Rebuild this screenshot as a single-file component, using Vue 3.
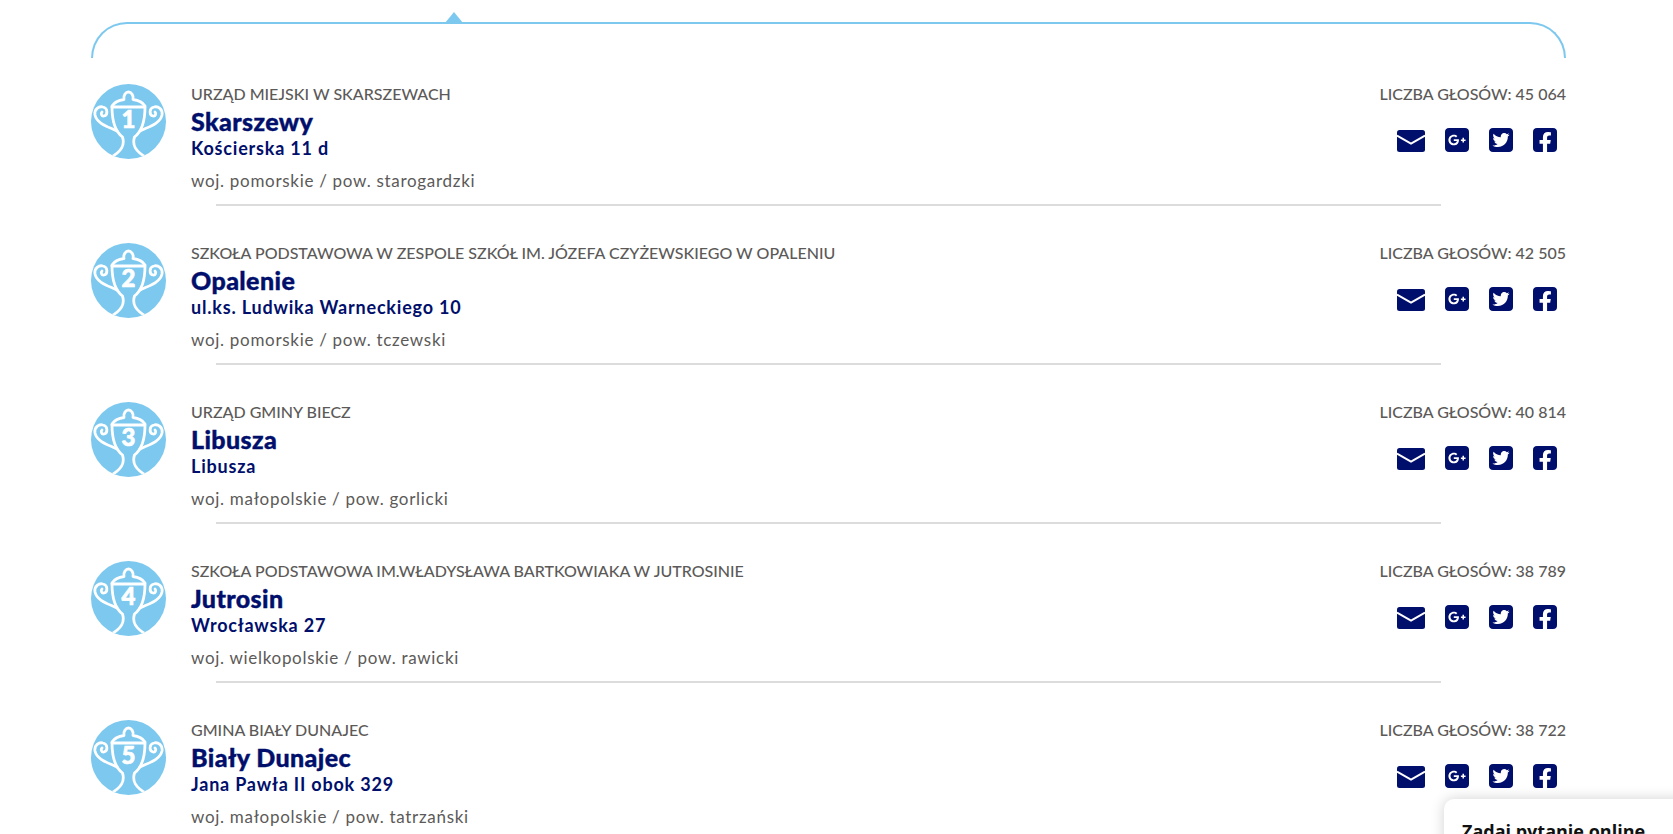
<script setup>
const rows = [
  { n: 1, org: 'URZĄD MIEJSKI W SKARSZEWACH', name: 'Skarszewy', addr: 'Kościerska 11 d', region: 'woj. pomorskie / pow. starogardzki', votes: '45 064' },
  { n: 2, org: 'SZKOŁA PODSTAWOWA W ZESPOLE SZKÓŁ IM. JÓZEFA CZYŻEWSKIEGO W OPALENIU', name: 'Opalenie', addr: 'ul.ks. Ludwika Warneckiego 10', region: 'woj. pomorskie / pow. tczewski', votes: '42 505' },
  { n: 3, org: 'URZĄD GMINY BIECZ', name: 'Libusza', addr: 'Libusza', region: 'woj. małopolskie / pow. gorlicki', votes: '40 814' },
  { n: 4, org: 'SZKOŁA PODSTAWOWA IM.WŁADYSŁAWA BARTKOWIAKA W JUTROSINIE', name: 'Jutrosin', addr: 'Wrocławska 27', region: 'woj. wielkopolskie / pow. rawicki', votes: '38 789' },
  { n: 5, org: 'GMINA BIAŁY DUNAJEC', name: 'Biały Dunajec', addr: 'Jana Pawła II obok 329', region: 'woj. małopolskie / pow. tatrzański', votes: '38 722' },
]
</script>

<template>
  <div class="page">
    <div class="frame"><span class="tip"></span></div>
    <section v-for="r in rows" :key="r.n" class="row">
      <div class="main">
        <svg class="badge" viewBox="0 0 75 75">
          <defs><clipPath id="disc"><circle cx="37.5" cy="37.5" r="37.5" /></clipPath></defs>
          <circle cx="37.5" cy="37.5" r="37.5" fill="#7dc8ee" />
          <g fill="none" stroke="#fff" stroke-width="2.8" stroke-linecap="round" stroke-linejoin="round" clip-path="url(#disc)">
            <path d="M21 23H54C54 40 50 48 43.5 53C41 61 44 67 56 74" />
            <path d="M21 23C21 40 25 48 31.5 53C34 61 31 67 19 74" />
            <path d="M21 22C24 17 29 16 33 15.5C32 11 35 8 37.5 8C40 8 43 11 42 15.5C46 16 51 17 54 22" />
            <path d="M26 47C18 43 6 40 4 31C3 25 8 22 12 23C17 24 17 31 13 32C10.500 32.500 9.500 29.500 11 28" />
            <path d="M49 47C57 43 69 40 71 31C72 25 67 22 63 23C58 24 58 31 62 32C64.500 32.500 65.500 29.500 64 28" />
          </g>
          <text x="37.500" y="44" text-anchor="middle" class="badge-num">{{ r.n }}</text>
        </svg>
        <div class="info">
          <div class="org">{{ r.org }}</div>
          <h3 class="name">{{ r.name }}</h3>
          <div class="addr">{{ r.addr }}</div>
          <div class="region">{{ r.region }}</div>
        </div>
        <div class="side">
          <div class="votes">LICZBA GŁOSÓW: {{ r.votes }}</div>
          <div class="icons">
            <svg class="mail" viewBox="0 0 28 22">
              <rect width="28" height="22" rx="2.500" fill="#000f6b" />
              <path d="M0 5.500L14 13.500L28 5.500" fill="none" stroke="#fff" stroke-width="2" />
            </svg>
            <svg class="soc" viewBox="0 32 448 448"><path fill="#000f6b" d="M400 32H48C21.500 32 0 53.500 0 80v352c0 26.500 21.500 48 48 48h352c26.500 0 48-21.500 48-48V80c0-26.500-21.500-48-48-48zM164 356c-55.300 0-100-44.700-100-100s44.700-100 100-100c27 0 49.500 9.800 67 26.200l-27.100 26.100c-7.400-7.100-20.300-15.400-39.800-15.400-34.100 0-61.900 28.200-61.900 63.200 0 34.900 27.800 63.200 61.900 63.200 39.600 0 54.400-28.500 56.800-43.100H164v-34.400h94.400c1 5 1.600 10.100 1.600 16.600 0 57.100-38.300 97.600-96 97.600zm220-81.800h-29v29h-29.200v-29h-29V245h29v-29H355v29h29v29.200z"/></svg>
            <svg class="soc" viewBox="0 32 448 448"><path fill="#000f6b" d="M400 32H48C21.500 32 0 53.500 0 80v352c0 26.500 21.500 48 48 48h352c26.500 0 48-21.500 48-48V80c0-26.500-21.500-48-48-48zm-48.900 158.800c.2 2.800.2 5.700.2 8.500 0 86.700-66 186.600-186.600 186.600-37.200 0-71.700-10.800-100.700-29.400 5.300.6 10.400.8 15.800.8 30.700 0 58.900-10.400 81.400-28-28.800-.6-53-19.500-61.300-45.500 10.100 1.500 19.200 1.500 29.600-1.200-30-6.100-52.500-32.500-52.500-64.400v-.8c8.700 4.900 18.900 7.900 29.600 8.300a65.447 65.447 0 0 1-29.200-54.600c0-12.200 3.200-23.400 8.900-33.100 32.300 39.800 80.800 65.800 135.200 68.600-9.300-44.500 24-80.600 64-80.600 18.900 0 35.900 7.900 47.900 20.700 14.800-2.800 29-8.300 41.600-15.800-4.900 15.200-15.200 28-28.800 36.100 13.200-1.400 26-5.100 37.800-10.200-8.900 13.100-20.100 24.700-32.900 34z"/></svg>
            <svg class="soc" viewBox="0 32 448 448"><path fill="#000f6b" d="M400 32H48A48 48 0 0 0 0 80v352a48 48 0 0 0 48 48h137.250V327.690h-63V256h63v-54.640c0-62.150 37-96.480 93.670-96.480 27.140 0 55.520 4.840 55.520 4.840v61h-31.270c-30.810 0-40.420 19.120-40.420 38.730V256h68.780l-11 71.690h-57.780V480H400a48 48 0 0 0 48-48V80a48 48 0 0 0-48-48z"/></svg>
          </div>
        </div>
      </div>
      <div class="divider"></div>
    </section>
    <aside class="chat">Zadaj pytanie online</aside>
  </div>
</template>

<style>
html, body { margin: 0; height: 834px; overflow: hidden; background: #fff; }
</style>

<style scoped>
.page {
  position: relative;
  height: 834px;
  overflow: hidden;
  padding: 22px 107px 0 91px;
  box-sizing: border-box;
  font-family: Lato, "Noto Sans", sans-serif;
}
.frame {
  position: relative;
  height: 36px;
  box-sizing: border-box;
  border: 2px solid #7dc8ee;
  border-bottom: 0;
  border-radius: 36px 36px 0 0;
  margin-bottom: 26px;
}
.tip {
  position: absolute;
  left: 352px;
  top: -12px;
  border-left: 9px solid transparent;
  border-right: 9px solid transparent;
  border-bottom: 11px solid #7dc8ee;
}
.row { height: 159px; }
.main { display: flex; align-items: flex-start; height: 120px; }
.badge { width: 75px; height: 75px; flex: none; margin-right: 25px; }
.badge-num { font: 900 24px Lato, sans-serif; fill: #fff; stroke: #fff; stroke-width: 0.7px; }
.info { flex: 1; }
.org { font-size: 16px; line-height: 20px; color: #5c5a58; font-weight: 500; }
.name { margin: 4px 0 0; font-size: 25px; line-height: 26px; font-weight: 900; letter-spacing: 0.4px; color: #000f6b; -webkit-text-stroke: 0.4px #000f6b; }
.addr { margin-top: 3px; font-size: 18px; line-height: 22px; font-weight: 700; letter-spacing: 0.8px; color: #000f6b; }
.region { margin-top: 11px; font-size: 17px; line-height: 21px; letter-spacing: 0.7px; color: #5c5a58; }
.side { display: flex; flex-direction: column; align-items: flex-end; }
.votes { font-size: 16px; line-height: 20px; color: #5c5a58; font-weight: 500; }
.icons { display: flex; align-items: flex-end; gap: 20px; margin: 24px 9px 0 0; }
.mail { width: 28px; height: 22px; }
.soc { width: 24px; height: 24px; border-radius: 4px; overflow: hidden; }
.divider { height: 2px; background: #dcdcdc; margin: 0 125px 0 125px; }
.chat {
  position: absolute;
  left: 1444px;
  top: 799px;
  width: 260px;
  height: 80px;
  box-sizing: border-box;
  padding: 21px 18px;
  background: #fff;
  border-radius: 10px;
  box-shadow: 0 0 14px rgba(0, 0, 0, 0.18);
  font: 700 18px/22px "Open Sans", sans-serif;
  color: #111;
}
</style>
